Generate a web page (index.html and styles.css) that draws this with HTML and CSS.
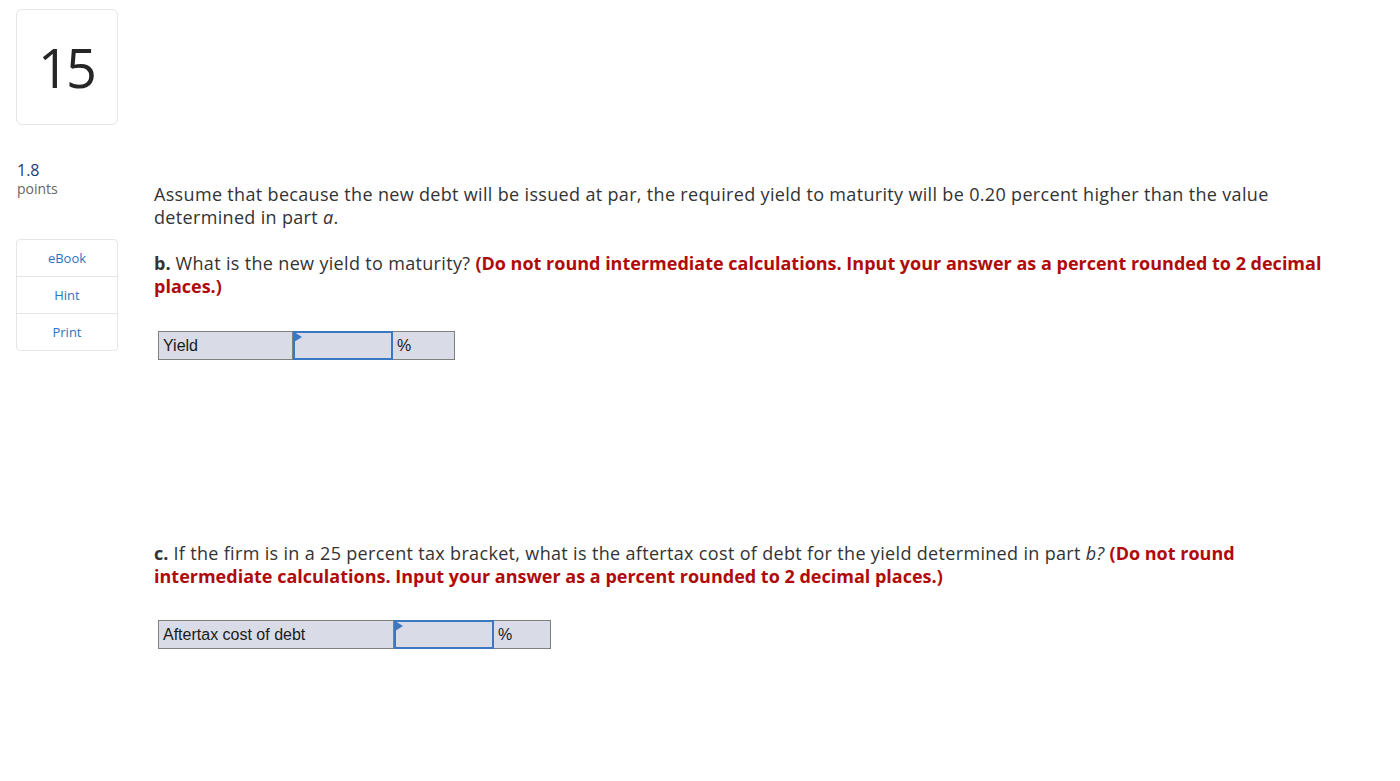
FILE: index.html
```html
<!DOCTYPE html>
<html>
<head>
<meta charset="utf-8">
<link rel="stylesheet" href="styles.css">
</head>
<body>
<div class="page">
  <aside class="side">
    <div class="qnum">15</div>
    <div class="score">1.8</div>
    <div class="pts">points</div>
    <div class="tools">
      <div class="tool">eBook</div>
      <div class="tool">Hint</div>
      <div class="tool">Print</div>
    </div>
  </aside>
  <main class="main">
    <p class="para">Assume that because the new debt will be issued at par, the required yield to maturity will be 0.20 percent higher than the value determined in part <i>a</i>.</p>
    <p class="para q"><b>b.</b> What is the new yield to maturity? <span class="note">(Do not round intermediate calculations. Input your answer as a percent rounded to 2 decimal places.)</span></p>
    <div class="answer">
      <div class="lbl lbl-b">Yield</div>
      <div class="inp"><span class="flag"></span></div>
      <div class="unit">%</div>
    </div>
    <p class="para q qc"><b>c.</b> If the firm is in a 25 percent tax bracket, what is the aftertax cost of debt for the yield determined in part <i>b?</i> <span class="note">(Do not round intermediate calculations. Input your answer as a percent rounded to 2 decimal places.)</span></p>
    <div class="answer">
      <div class="lbl lbl-c">Aftertax cost of debt</div>
      <div class="inp"><span class="flag"></span></div>
      <div class="unit unit-c">%</div>
    </div>
  </main>
</div>
</body>
</html>
```

FILE: styles.css
```css
html, body {
  margin: 0;
  padding: 0;
  background: #ffffff;
}
body {
  font-family: "Open Sans", "Lato", sans-serif;
  color: #333333;
}
.page {
  display: flex;
  align-items: flex-start;
}
.side {
  width: 102px;
  margin-left: 16px;
  padding-top: 9px;
  flex: none;
}
.qnum {
  height: 116px;
  border: 1px solid #e6e6e6;
  border-radius: 6px;
  display: flex;
  align-items: center;
  justify-content: center;
  font-size: 54px;
  font-weight: 400;
  color: #262626;
  font-family: "Open Sans", "Lato", sans-serif;
  letter-spacing: -3px;
  padding-right: 2px;
  box-sizing: border-box;
}
.score {
  margin-top: 35px;
  font-size: 16px;
  color: #1d3c6e;
  line-height: 20px;
  padding-left: 1px;
}
.pts {
  font-size: 14px;
  color: #666666;
  line-height: 18px;
  padding-left: 1px;
}
.tools {
  margin-top: 41px;
  border: 1px solid #e6e6e6;
  border-radius: 4px;
}
.tool {
  height: 36px;
  display: flex;
  align-items: center;
  justify-content: center;
  font-size: 13px;
  color: #2c75c2;
  border-top: 1px solid #e6e6e6;
}
.tool:first-child {
  border-top: none;
}
.main {
  margin-left: 36px;
  padding-top: 183px;
  width: 1180px;
}
.para {
  margin: 0 0 23px 0;
  font-size: 18px;
  line-height: 23px;
  color: #333333;
  letter-spacing: 0.33px;
}
.para b {
  font-weight: 700;
  letter-spacing: 0;
}
.note {
  font-weight: 700;
  color: #b00b0b;
  letter-spacing: 0;
}
.q {
  margin-bottom: 33px;
}
.qc {
  margin-top: 182px;
  margin-bottom: 32px;
}
.answer {
  display: flex;
  margin-left: 4px;
  height: 29px;
  font-family: "Liberation Sans", Arial, sans-serif;
  font-size: 16px;
  color: #1a1a1a;
}
.lbl, .unit {
  background: #d9dce6;
  border: 1px solid #808080;
  display: flex;
  align-items: center;
  padding-left: 4px;
  box-sizing: border-box;
}
.lbl-b { width: 135px; }
.lbl-c { width: 236px; }
.unit { width: 62px; border-left: none; }
.unit-c { width: 57px; }
.inp {
  position: relative;
  background: #d9dce6;
  border: 2px solid #3a78c4;
  box-sizing: border-box;
  width: 100px;
}
.flag {
  position: absolute;
  left: -1px;
  top: -1px;
  width: 0;
  height: 0;
  border-top: 5px solid transparent;
  border-bottom: 5px solid transparent;
  border-left: 8px solid #3a78c4;
}
```
